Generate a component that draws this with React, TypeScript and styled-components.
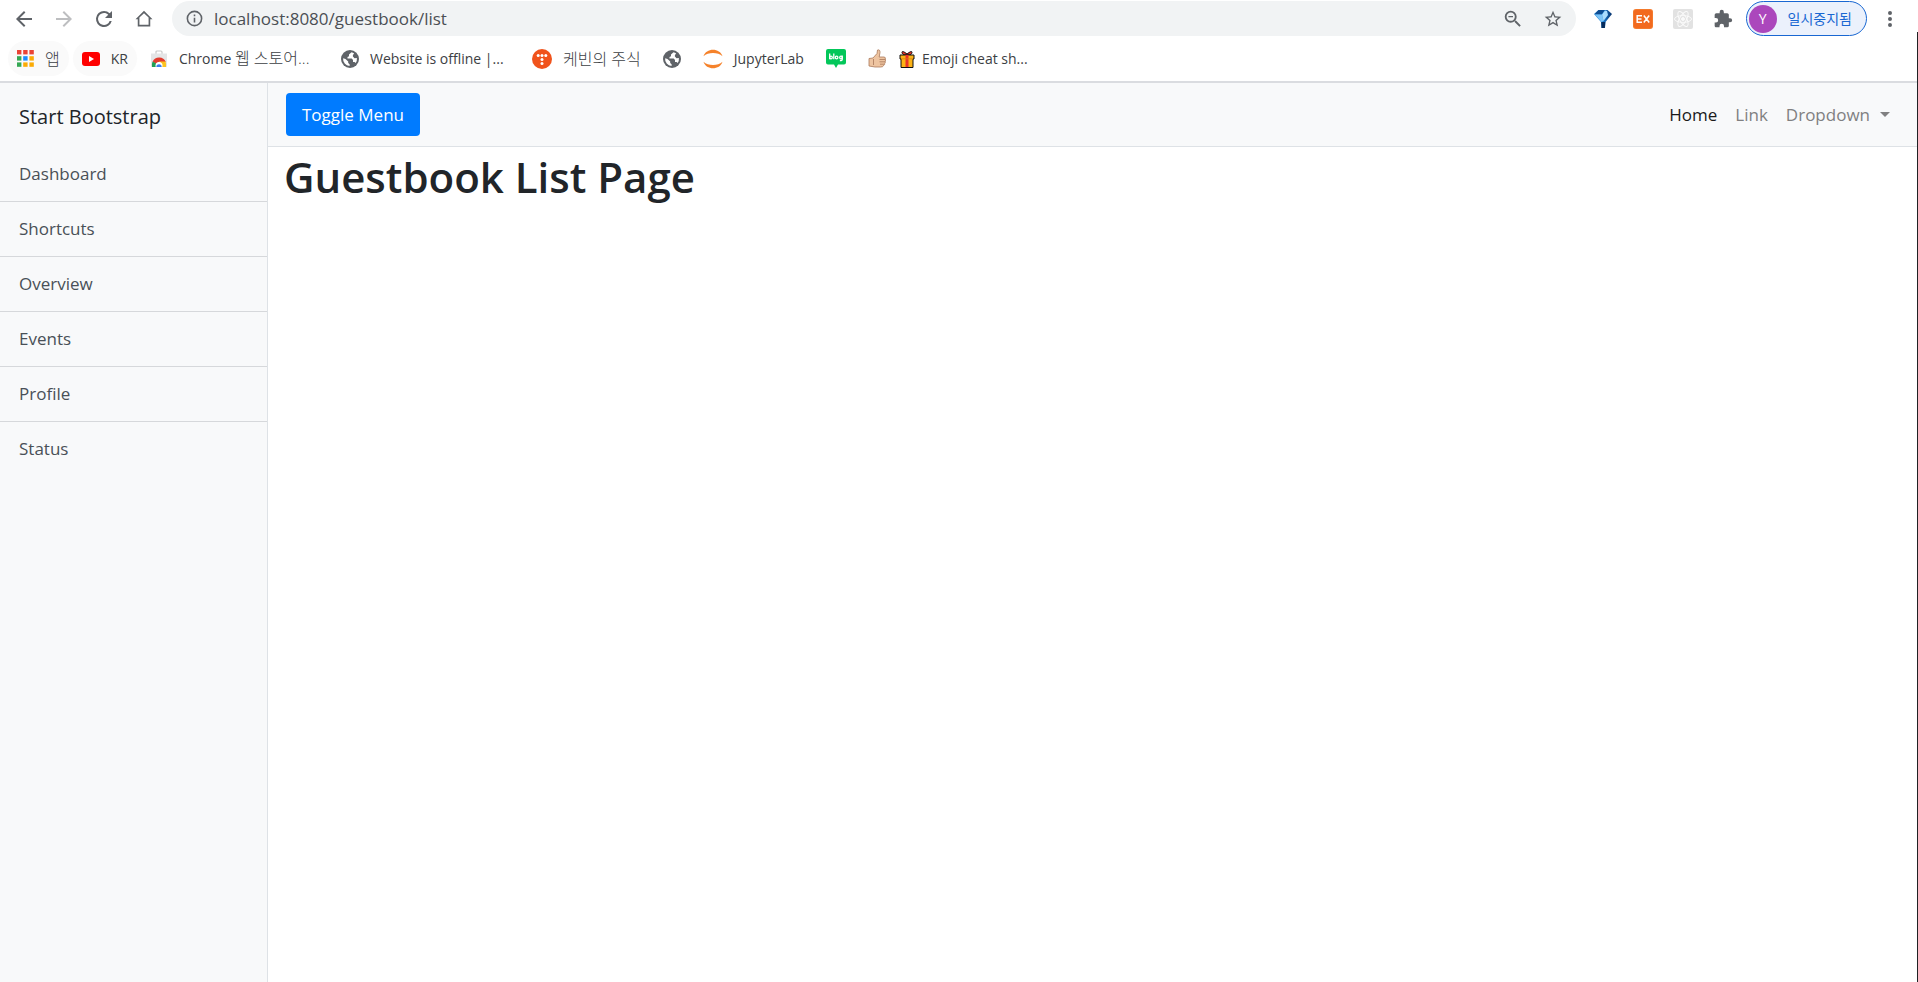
import React from "react";
import styled, { createGlobalStyle } from "styled-components";

const GlobalStyle = createGlobalStyle`
  *, *::before, *::after { box-sizing: border-box; }
  body {
    margin: 0;
    background: #fff;
    color: #212529;
    font-family: "Open Sans", "Noto Sans CJK KR", sans-serif;
    font-size: 17px;
    line-height: 27px;
  }
  svg { display: block; flex: none; }
  a { color: inherit; text-decoration: none; }
  button { font: inherit; color: inherit; border: 0; padding: 0; background: none; cursor: pointer; }
`;

const Window = styled.div`
  position: relative;
  display: flex;
  flex-direction: column;
  min-height: 100vh;
`;

const WindowEdge = styled.div`
  position: absolute;
  top: 32px;
  right: 0;
  bottom: 0;
  width: 1px;
  background: #202124;
`;

const Toolbar = styled.header`
  display: flex;
  align-items: center;
  padding: 1px 9px 0 4px;
`;

const IconButton = styled.button<{ $faded?: boolean }>`
  display: flex;
  align-items: center;
  justify-content: center;
  width: 40px;
  height: 35px;
  color: ${(p) => (p.$faded ? "#bdbec0" : "#5f6368")};
`;

const AddressBar = styled.form`
  display: flex;
  flex: 1;
  align-items: center;
  height: 35px;
  margin: 0 7px 0 8px;
  padding: 0 3px 0 2px;
  border-radius: 18px;
  background: #f1f3f4;
`;

const AddressInput = styled.input`
  flex: 1;
  min-width: 0;
  padding: 0;
  border: 0;
  outline: 0;
  background: none;
  color: #4b4f54;
  font: inherit;
`;

const ProfileButton = styled.button`
  display: flex;
  align-items: center;
  gap: 11px;
  height: 35px;
  margin: 0 4px 0 3px;
  padding: 0 14px 0 2px;
  border: 1px solid #1967d2;
  border-radius: 18px;
  background: #ebf1fc;
  color: #1967d2;
  font-size: 14px;
  line-height: 20px;
  white-space: nowrap;
`;

const Avatar = styled.span`
  display: flex;
  align-items: center;
  justify-content: center;
  width: 28px;
  height: 28px;
  border-radius: 50%;
  background: #ab47bc;
  color: #fff;
  font-size: 14px;
`;

const MenuButton = styled(IconButton)`
  width: 38px;
`;

const BookmarksBar = styled.nav`
  display: flex;
  align-items: center;
  gap: 4px;
  height: 47px;
  padding: 0 8px;
  border-bottom: 2px solid #dadce0;
  color: #3c4043;
  font-size: 14px;
  line-height: 20px;
`;

const Bookmark = styled.a<{ $tinted?: boolean; $truncated?: boolean }>`
  display: flex;
  align-items: center;
  gap: 11px;
  width: ${(p) => (p.$truncated ? "187px" : "auto")};
  height: 35px;
  padding: 0 9px;
  border-radius: 18px;
  white-space: nowrap;
  background: ${(p) => (p.$tinted ? "#fafafa" : "transparent")};
`;

const Hangul = styled.span`
  font-size: 16px;
  font-weight: 300;
`;

const GiftBookmark = styled(Bookmark)`
  gap: 7px;
  padding-left: 0;
`;

const Page = styled.div`
  display: flex;
  flex: 1;
`;

const Sidebar = styled.aside`
  flex: none;
  width: 268px;
  border-right: 1px solid #dee2e6;
  background: #f8f9fa;
`;

const SidebarHeading = styled.div`
  padding: 19px 19px 15px;
  font-size: 20px;
  line-height: 30px;
`;

const SidebarLink = styled.a`
  display: block;
  padding: 13px 19px 14px;
  border-bottom: 1px solid #d6d8db;
  color: #495057;

  &:last-child { border-bottom: 0; }
`;

const Content = styled.div`
  flex: 1;
  min-width: 0;
`;

const Navbar = styled.nav`
  display: flex;
  align-items: center;
  justify-content: space-between;
  height: 64px;
  padding: 0 28px 0 18px;
  border-bottom: 1px solid #dee2e6;
  background: #f8f9fa;
`;

const ToggleButton = styled.button`
  padding: 8px 16px;
  border-radius: 4px;
  background: #007bff;
  color: #fff;
`;

const NavLinks = styled.div`
  display: flex;
  gap: 18px;
`;

const NavLink = styled.a<{ $active?: boolean }>`
  display: flex;
  align-items: center;
  gap: 10px;
  color: ${(p) => (p.$active ? "#1a1a1a" : "#808081")};
`;

const Caret = styled.span`
  border-top: 5px solid;
  border-left: 5px solid transparent;
  border-right: 5px solid transparent;
`;

const Main = styled.main`
  padding: 1px 16px;
`;

const Title = styled.h1`
  margin: 0 0 9px;
  font-size: 42px;
  font-weight: 600;
  line-height: 58px;
`;

const Material = ({ d, size = 20 }: { d: string; size?: number }) => (
  <svg width={size} height={size} viewBox="0 0 24 24" fill="currentColor" aria-hidden="true">
    <path d={d} />
  </svg>
);

const paths = {
  back: "M20 11H7.83l5.59-5.59L12 4l-8 8 8 8 1.41-1.41L7.83 13H20v-2z",
  forward: "M12 4l-1.41 1.41L16.17 11H4v2h12.17l-5.58 5.59L12 20l8-8z",
  reload:
    "M17.65 6.35A7.96 7.96 0 0 0 12 4a8 8 0 1 0 7.73 10h-2.08A6 6 0 1 1 12 6c1.66 0 3.14.69 4.22 1.78L13 11h7V4l-2.35 2.35z",
  home: "M12 5 17.500 10.300V19h-11v-8.700L12 5M12 2.200 1.800 12.200H4.500V21h15v-8.800h2.700L12 2.200z",
  info: "M11 7h2v2h-2zm0 4h2v6h-2zm1-9a10 10 0 1 0 0 20 10 10 0 0 0 0-20zm0 18a8 8 0 1 1 0-16 8 8 0 0 1 0 16z",
  zoomOut:
    "M15.5 14h-.79l-.28-.27A6.47 6.47 0 0 0 16 9.5 6.5 6.5 0 1 0 9.5 16c1.61 0 3.09-.59 4.23-1.57l.27.28v.79l5 4.99L20.49 19l-4.99-5zm-6 0a4.5 4.5 0 1 1 0-9 4.5 4.5 0 0 1 0 9zM7 8.8h5v1.4H7z",
  star: "M22 9.24l-7.19-.62L12 2 9.19 8.63 2 9.24l5.46 4.73L5.82 21 12 17.27 18.18 21l-1.63-7.03L22 9.24zM12 15.4l-3.76 2.27 1-4.28-3.32-2.88 4.38-.38L12 6.1l1.71 4.04 4.38.38-3.32 2.88 1 4.28L12 15.4z",
  puzzle:
    "M20.5 11H19V7a2 2 0 0 0-2-2h-4V3.5a2.5 2.5 0 0 0-5 0V5H4a2 2 0 0 0-2 2v3.8h1.5a2.7 2.7 0 0 1 0 5.4H2V20c0 1.1.9 2 2 2h3.8v-1.5a2.7 2.7 0 0 1 5.4 0V22H17a2 2 0 0 0 2-2v-4h1.5a2.5 2.5 0 0 0 0-5z",
  more: "M12 8a2 2 0 1 0 0-4 2 2 0 0 0 0 4zm0 2a2 2 0 1 0 0 4 2 2 0 0 0 0-4zm0 6a2 2 0 1 0 0 4 2 2 0 0 0 0-4z",
};

const GemIcon = () => (
  <svg width="18" height="18" viewBox="0 0 18 18" aria-hidden="true">
    <defs>
      <linearGradient id="gem" x2="1" y2="0">
        <stop offset="0" stopColor="#2f8fdc" />
        <stop offset=".5" stopColor="#1a7fd6" />
        <stop offset="1" stopColor="#052f68" />
      </linearGradient>
    </defs>
    <path d="M4.500 0h9L18 4l-6.500 8-.5 6H7.500L7 12 0 4z" fill="url(#gem)" />
    <path d="M4.500 0h6L8 4.500.5 4.300z" fill="#0d4c91" />
    <path d="M1 4.500h7l1.500 6.500-2 1z" fill="#7cc4f7" />
    <path d="M8 4.500 11 .5l2 .5 1 4-4.500 6z" fill="#a9dcfd" />
    <path d="M7.300 12h4l-.5 6H7.500z" fill="#062b5b" />
  </svg>
);

const ExIcon = () => (
  <svg width="20" height="20" viewBox="0 0 20 20" aria-hidden="true">
    <rect width="20" height="20" rx="3" fill="#f47a2c" />
    <rect x="1" y="1" width="18" height="18" rx="2" fill="#f26a1f" />
    <g fill="none" stroke="#fff" strokeWidth="1.5">
      <path d="M9 6.8H4.200v6.400H9M4.200 10h4.300M10.800 6.500l5.400 7M16.200 6.500l-5.400 7" />
    </g>
  </svg>
);

const AtomIcon = () => (
  <svg width="20" height="20" viewBox="0 0 20 20" fill="none" stroke="#fafafa" aria-hidden="true">
    <rect width="20" height="20" rx="2" fill="#e2e2e2" stroke="none" />
    <ellipse cx="10" cy="10" rx="8.500" ry="3.400" />
    <ellipse cx="10" cy="10" rx="8.500" ry="3.400" transform="rotate(60 10 10)" />
    <ellipse cx="10" cy="10" rx="8.500" ry="3.400" transform="rotate(120 10 10)" />
    <circle cx="10" cy="10" r="1.500" fill="#fafafa" />
  </svg>
);

const appColors = ["#ea4335", "#ea4335", "#ea4335", "#34a853", "#1a8cff", "#fbab05", "#34a853", "#fbab05", "#fbab05"];

const AppsIcon = () => (
  <svg width="17" height="17" viewBox="0 0 17 17" aria-hidden="true">
    {appColors.map((c, i) => (
      <rect key={i} x={(i % 3) * 6.2} y={Math.floor(i / 3) * 6.2} width="4.4" height="4.4" fill={c} />
    ))}
  </svg>
);

const YoutubeIcon = () => (
  <svg width="18" height="14" viewBox="0 0 18 14" aria-hidden="true">
    <rect width="18" height="14" rx="3" fill="#f00" />
    <path d="M7 4l5 3-5 3z" fill="#fff" />
  </svg>
);

const StoreIcon = () => (
  <svg width="18" height="18" viewBox="0 0 18 18" aria-hidden="true">
    <path d="M6 4V2q0-1 1-1h4q1 0 1 1v2" fill="none" stroke="#c8c8c8" strokeWidth="1.2" />
    <path d="M1 3.5h16V17H1z" fill="#e4e5e6" />
    <path d="M2.600 11.500A7.300 7.300 0 0 1 15.800 12H9l-3 2z" fill="#e23a2e" />
    <path d="M9 11.500h6.500q1 2.500.5 5.500h-5z" fill="#fcc31e" />
    <path d="M2.600 11.500Q1.500 14 2 17h6l-1-3z" fill="#1e9e54" />
    <circle cx="9" cy="15.500" r="3.500" fill="#fff" />
    <path d="M6.300 17a2.700 2.700 0 1 1 5.400 0z" fill="#3b7ded" />
  </svg>
);

const GlobeIcon = () => (
  <svg width="18" height="18" viewBox="0 0 18 18" aria-hidden="true">
    <circle cx="9" cy="9" r="9" fill="#5f6368" />
    <path
      d="M10.500 2.200 8 4.500v1.800L6.500 7v1.500h4.200L12 10v2h1.600l1.100.9A7 7 0 0 0 15.900 8l-2.400.2-1.600-1.700V5l1.300-1.400a7 7 0 0 0-2.700-1.400zM2.100 8.200a7 7 0 0 0 6.500 7.700v-1.700L7.200 13v-1.600L4.500 9z"
      fill="#fff"
    />
  </svg>
);

const TistoryIcon = () => (
  <svg width="20" height="20" viewBox="0 0 20 20" aria-hidden="true">
    <circle cx="10" cy="10" r="10" fill="#f0531c" />
    <g fill="#fff">
      <circle cx="6.200" cy="6.600" r="1.500" />
      <circle cx="10" cy="6.600" r="1.500" />
      <circle cx="13.800" cy="6.600" r="1.500" />
      <circle cx="10" cy="10.500" r="1.500" />
      <circle cx="10" cy="14.400" r="1.500" />
    </g>
  </svg>
);

const JupyterIcon = () => (
  <svg width="20" height="20" viewBox="0 0 20 20" fill="#f5822b" aria-hidden="true">
    <path d="M.5 7.200C3-1.500 17-1.500 19.500 7.200 15 2.800 5 2.800.5 7.200z" />
    <path d="M.5 12.800C3 21.500 17 21.500 19.500 12.800 15 17.200 5 17.200.5 12.800z" />
  </svg>
);

const BlogIcon = () => (
  <svg width="20" height="19" viewBox="0 0 20 19" aria-hidden="true">
    <path d="M2 0h16q2 0 2 2v11.500q0 2-2 2h-6L10 19l-2-3.500H2q-2 0-2-2V2q0-2 2-2z" fill="#03c75a" />
    <g fill="none" stroke="#fff" strokeWidth="1.300">
      <path d="M3.700 4.500v5.800M7.800 4.500v5.800M16.200 6.500v4.200q0 1-2.300.8" />
      <circle cx="5" cy="8.500" r="1.300" />
      <circle cx="10.600" cy="8.500" r="1.300" />
      <circle cx="15" cy="8.500" r="1.300" />
    </g>
  </svg>
);

const ThumbIcon = () => (
  <svg width="18" height="19" viewBox="0 0 18 19" aria-hidden="true">
    <path
      d="M1 9.500 5 9l4-4.500L9.500 1q2.600-.8 2.500 2.500L11.200 8H16q1.800.2 1.300 2 .5 1 0 2.300.3 1.200-.6 2.200 0 1.500-1 2-.8 1.500-3 1.500H7L1 17z"
      fill="#eec4a0"
      stroke="#a9795a"
      strokeWidth=".8"
    />
    <path d="M11.500 10.500H17M11.500 12.800H17M12 15.200h4M5.500 10v6" stroke="#a9795a" strokeWidth=".8" />
  </svg>
);

const GiftIcon = () => (
  <svg width="16" height="18" viewBox="0 0 16 18" aria-hidden="true">
    <path d="M8 5Q3 5 3 2.500T8 4q5-4 5-1.500T8 5z" fill="#e8352b" stroke="#111" />
    <path d="M1 5h14v4h-1v8.500H2V9H1z" fill="#fcb316" stroke="#111" />
    <path d="M6.500 5h3v12h-3z" fill="#e8352b" />
    <path d="M2 8.800h12" stroke="#d97f0c" strokeWidth=".8" />
  </svg>
);

interface BookmarkItem {
  label: string;
  icon: React.ReactNode;
  text?: React.ReactNode;
  tinted?: boolean;
  truncated?: boolean;
}

const bookmarks: BookmarkItem[] = [
  { label: "앱", text: <Hangul>앱</Hangul>, icon: <AppsIcon />, tinted: true },
  { label: "KR", text: "KR", icon: <YoutubeIcon />, tinted: true },
  {
    label: "Chrome 웹 스토어",
    text: <span>Chrome <Hangul>웹 스토어...</Hangul></span>,
    icon: <StoreIcon />,
    truncated: true,
  },
  { label: "Website is offline", text: "Website is offline |...", icon: <GlobeIcon />, truncated: true },
  { label: "케빈의 주식", text: <Hangul>케빈의 주식</Hangul>, icon: <TistoryIcon /> },
  { label: "Website", icon: <GlobeIcon /> },
  { label: "JupyterLab", text: "JupyterLab", icon: <JupyterIcon /> },
  { label: "Blog", icon: <BlogIcon /> },
  { label: "Thumbs up", icon: <ThumbIcon /> },
];

const sections = ["Dashboard", "Shortcuts", "Overview", "Events", "Profile", "Status"];

export default function App() {
  return (
    <Window>
      <GlobalStyle />
      <Toolbar>
        <IconButton aria-label="Back"><Material d={paths.back} size={24} /></IconButton>
        <IconButton aria-label="Forward" $faded><Material d={paths.forward} size={24} /></IconButton>
        <IconButton aria-label="Reload"><Material d={paths.reload} size={24} /></IconButton>
        <IconButton aria-label="Home page"><Material d={paths.home} /></IconButton>
        <AddressBar onSubmit={(e) => e.preventDefault()}>
          <IconButton type="button" aria-label="Site information"><Material d={paths.info} size={19} /></IconButton>
          <AddressInput aria-label="Address" defaultValue="localhost:8080/guestbook/list" spellCheck={false} />
          <IconButton type="button" aria-label="Zoom"><Material d={paths.zoomOut} size={22} /></IconButton>
          <IconButton type="button" aria-label="Bookmark this page"><Material d={paths.star} /></IconButton>
        </AddressBar>
        <IconButton aria-label="Gem extension"><GemIcon /></IconButton>
        <IconButton aria-label="EX extension"><ExIcon /></IconButton>
        <IconButton aria-label="React extension"><AtomIcon /></IconButton>
        <IconButton aria-label="Extensions"><Material d={paths.puzzle} /></IconButton>
        <ProfileButton>
          <Avatar>Y</Avatar>
          일시중지됨
        </ProfileButton>
        <MenuButton aria-label="Menu"><Material d={paths.more} size={24} /></MenuButton>
      </Toolbar>
      <BookmarksBar aria-label="Bookmarks">
        {bookmarks.map((b, i) => (
          <Bookmark key={i} href="#" aria-label={b.label} $tinted={b.tinted} $truncated={b.truncated}>
            {b.icon}
            {b.text}
          </Bookmark>
        ))}
        <GiftBookmark href="#">
          <GiftIcon />
          Emoji cheat sh...
        </GiftBookmark>
      </BookmarksBar>
      <Page>
        <Sidebar>
          <SidebarHeading>Start Bootstrap</SidebarHeading>
          <nav aria-label="Sections">
            {sections.map((s) => (
              <SidebarLink key={s} href="#">{s}</SidebarLink>
            ))}
          </nav>
        </Sidebar>
        <Content>
          <Navbar>
            <ToggleButton>Toggle Menu</ToggleButton>
            <NavLinks>
              <NavLink href="#" $active>Home</NavLink>
              <NavLink href="#">Link</NavLink>
              <NavLink href="#">Dropdown<Caret /></NavLink>
            </NavLinks>
          </Navbar>
          <Main>
            <Title>Guestbook List Page</Title>
          </Main>
        </Content>
      </Page>
      <WindowEdge />
    </Window>
  );
}
